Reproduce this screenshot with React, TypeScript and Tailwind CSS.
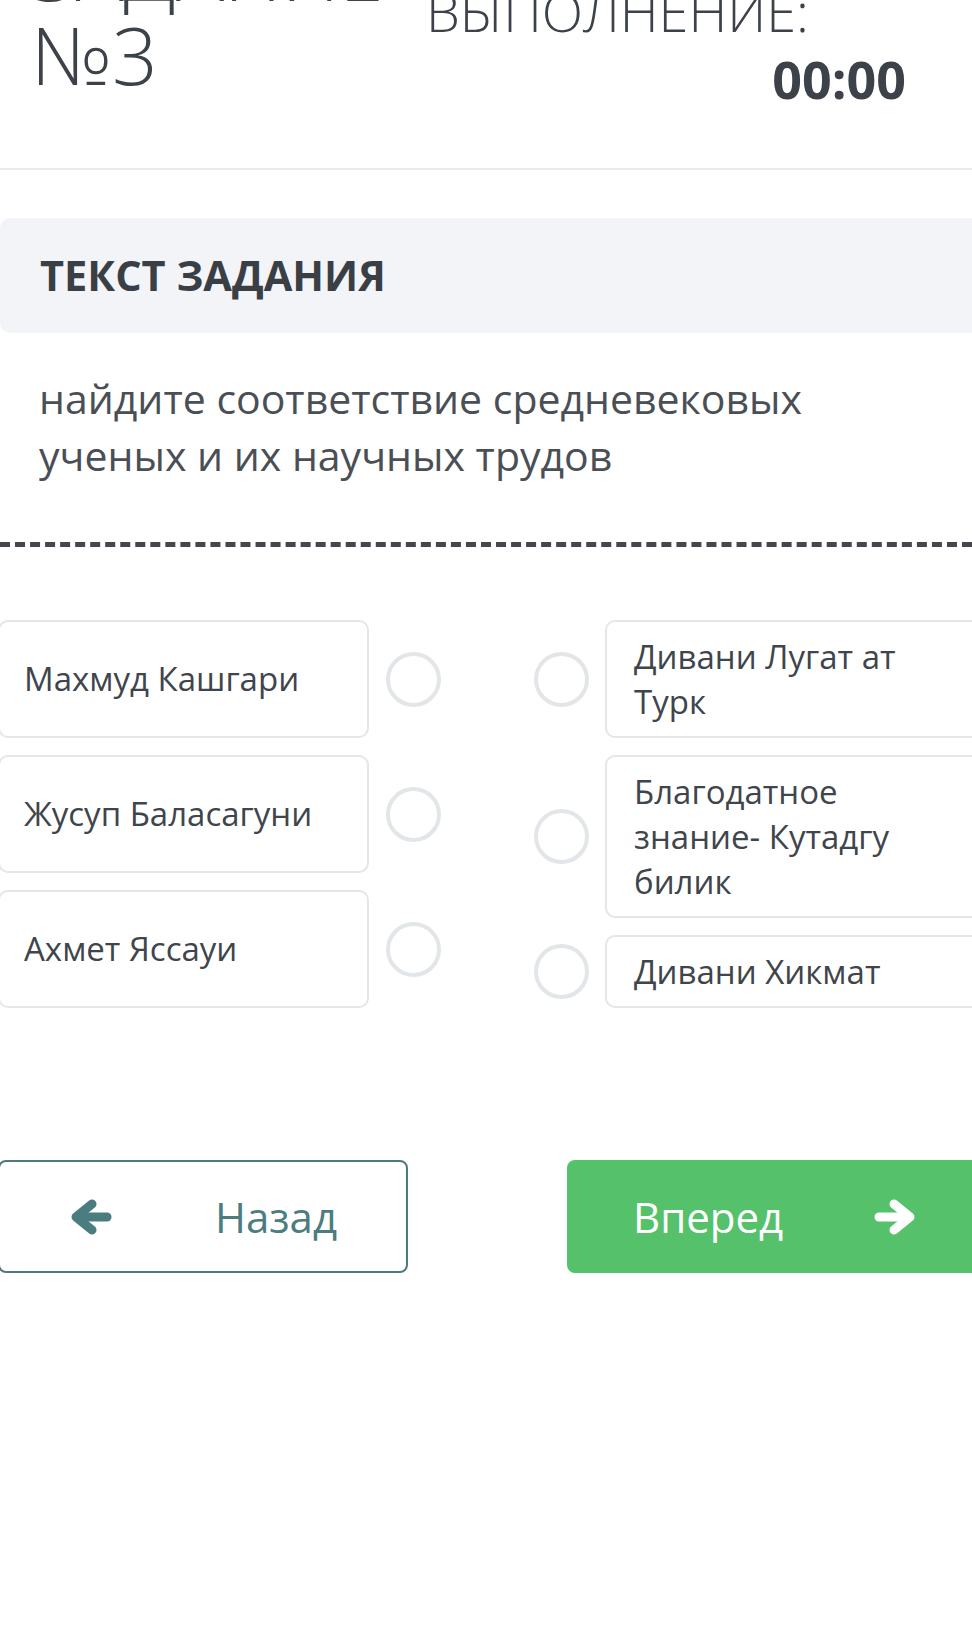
import React from "react";

const leftItems = ["Махмуд Кашгари", "Жусуп Баласагуни", "Ахмет Яссауи"];
const rightItems = ["Дивани Лугат ат Турк", "Благодатное знание- Кутадгу билик", "Дивани Хикмат"];

function Radio() {
  return <div className="w-[55px] h-[55px] shrink-0 rounded-full border-[4px] border-[#e3e6e9] bg-white" />;
}

function Arrow({ dir }: { dir: "left" | "right" }) {
  return (
    <svg
      viewBox="0 0 42 36"
      className={"w-[42px] h-[36px] shrink-0" + (dir === "right" ? " rotate-180" : "")}
      fill="none"
      stroke="currentColor"
      strokeWidth={9}
      strokeLinecap="round"
      strokeLinejoin="round"
    >
      <path d="M22 5 L6 18 L22 31" />
      <path d="M8 18 L37 18" />
    </svg>
  );
}

export default function App() {
  return (
    <div
      className="w-[972px] h-[1628px] overflow-hidden bg-white text-[#3d424a]"
      style={{ fontFamily: "'Open Sans', 'Noto Sans', sans-serif" }}
    >
      {/* header */}
      <div className="h-[168px] flex">
        <div className="pl-[31px] w-[426px] shrink-0 -mt-[72px] text-[80px] leading-[84px] font-light">
          <div>ЗАДАНИЕ</div>
          <div>№3</div>
        </div>
        <div className="w-[480px] shrink-0 -mt-[22px]">
          <div className="text-[54px] leading-[66px] font-light whitespace-nowrap">ВЫПОЛНЕНИЕ:</div>
          <div className="mt-[2px] text-[52px] leading-[66px] font-bold text-right">00:00</div>
        </div>
      </div>
      <div className="h-[2px] bg-[#e8e9eb]" />

      {/* task title */}
      <div className="mt-[48px] h-[115px] w-[1000px] rounded-l-[10px] bg-[#f3f4f8] flex items-center pl-[40px]">
        <span className="text-[41.5px] font-bold text-[#3a3f46]">ТЕКСТ ЗАДАНИЯ</span>
      </div>

      <div className="mt-[37px] pl-[39px] text-[41px] leading-[57px] text-[#4a4f55]">
        найдите соответствие средневековых
        <br />
        ученых и их научных трудов
      </div>

      <div className="mt-[58px] border-t-[5px] border-dashed border-[#44484e]" />

      {/* matching */}
      <div className="mt-[73px] flex items-start -ml-[2px]">
        <div className="flex flex-col gap-[17px] shrink-0">
          {leftItems.map((t) => (
            <div key={t} className="flex items-center">
              <div className="w-[371px] h-[118px] shrink-0 rounded-[10px] border-2 border-[#e4e6e8] flex items-center pl-[24px] text-[33px] leading-[46px] text-[#40454c]">
                {t}
              </div>
              <div className="ml-[17px]">
                <Radio />
              </div>
            </div>
          ))}
        </div>
        <div className="ml-[93px] flex flex-col gap-[17px] shrink-0">
          {rightItems.map((t) => (
            <div key={t} className="flex items-center">
              <Radio />
              <div className="ml-[16px] w-[420px] shrink-0 rounded-[10px] border-2 border-[#e4e6e8] py-[12px] pl-[27px] pr-[60px] text-[33px] leading-[45px] text-[#40454c]">
                {t}
              </div>
            </div>
          ))}
        </div>
      </div>

      {/* buttons */}
      <div className="mt-[152px] flex -ml-[2px]">
        <div className="w-[410px] h-[113px] shrink-0 rounded-[8px] border-2 border-[#4d7a80] flex items-center text-[#4a7c80]">
          <div className="ml-[70px]">
            <Arrow dir="left" />
          </div>
          <span className="ml-[103px] text-[42px]">Назад</span>
        </div>
        <div className="ml-[159px] w-[420px] h-[113px] shrink-0 rounded-[8px] bg-[#55c16a] flex items-center text-white">
          <span className="ml-[66px] text-[42px]">Вперед</span>
          <div className="ml-[91px]">
            <Arrow dir="right" />
          </div>
        </div>
      </div>
    </div>
  );
}
